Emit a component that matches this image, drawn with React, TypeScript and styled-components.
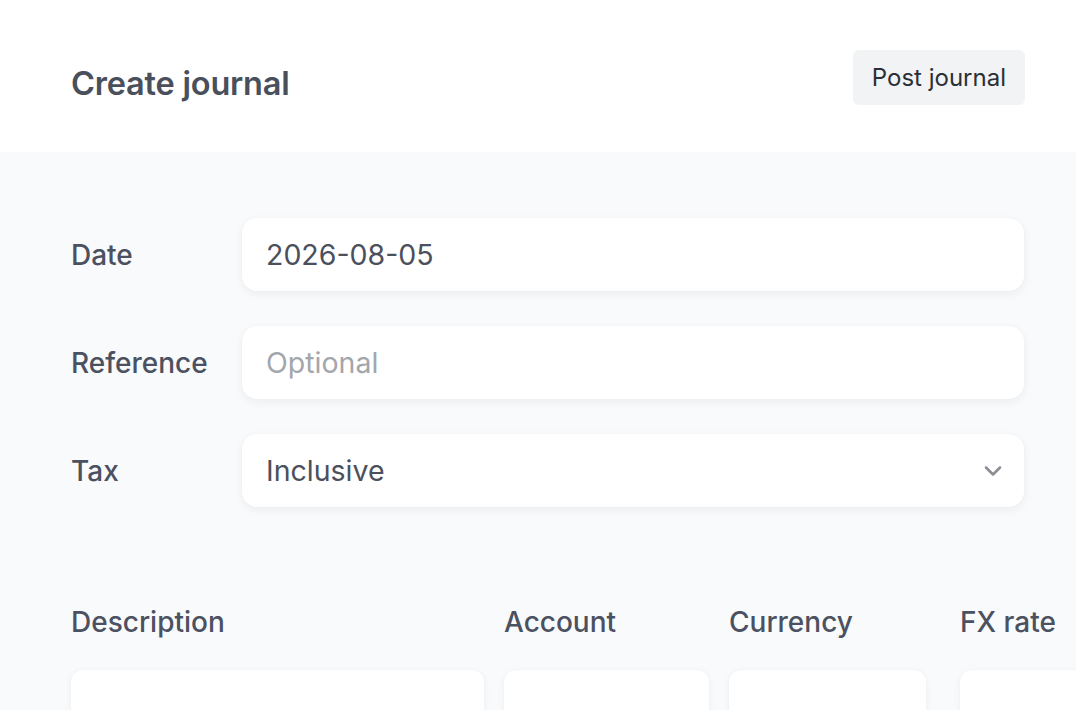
import React, {FC} from 'react';
import styled, {createGlobalStyle} from 'styled-components';
import {ChevronDown} from 'lucide-react';

const GlobalStyle = createGlobalStyle`
    html, body {
        margin: 0;
        padding: 0;
        background: #ffffff;
    }
    body {
        font-family: Inter, "Noto Sans", "Liberation Sans", sans-serif;
        -webkit-font-smoothing: antialiased;
    }
`;

const Page = styled.div`
    width: 1076px;
    height: 710px;
    overflow: hidden;
    display: flex;
    flex-direction: column;
`;

const Header = styled.header`
    height: 152px;
    flex-shrink: 0;
    box-sizing: border-box;
    padding: 0 51px 0 71px;
    display: flex;
    align-items: center;
    justify-content: space-between;
    background: #ffffff;
`;

const Title = styled.h1`
    margin: 0;
    font-size: 32.5px;
    font-weight: 600;
    color: #4a4f5c;
    letter-spacing: -0.2px;
    transform: translateY(7px);
`;

const PostButton = styled.button`
    height: 55px;
    margin-top: 3px;
    padding: 0 19px;
    border: none;
    border-radius: 6px;
    background: #f1f3f5;
    color: #2b2f36;
    font-family: inherit;
    font-size: 24px;
    font-weight: 400;
`;

const Body = styled.main`
    flex: 1;
    background: #f9fafb;
    padding: 66px 52px 0 71px;
    display: flex;
    flex-direction: column;
    gap: 35px;
`;

const FieldRow = styled.div`
    display: grid;
    grid-template-columns: 171px 1fr;
    align-items: center;
`;

const Label = styled.label`
    font-size: 28px;
    font-weight: 500;
    color: #4b5160;
`;

const Field = styled.div<{$placeholder?: boolean}>`
    height: 73px;
    box-sizing: border-box;
    padding: 0 24px;
    display: flex;
    align-items: center;
    justify-content: space-between;
    background: #ffffff;
    border-radius: 15px;
    box-shadow: 0 3px 10px rgba(30, 41, 59, 0.06), 0 0 2px rgba(30, 41, 59, 0.04);
    font-size: 28.5px;
    color: ${(p) => (p.$placeholder ? '#a3a6ab' : '#4b505c')};
`;

const Chevron = styled(ChevronDown)`
    color: #8a8d93;
    margin-right: -7px;
`;

const Lines = styled.div`
    margin-top: 63px;
    display: grid;
    grid-template-columns: 413px 205px 211px 200px;
    column-gap: 20px;
    row-gap: 31px;
    margin-right: -200px;
`;

const ColumnHead = styled.div`
    font-size: 28px;
    font-weight: 500;
    color: #4b5160;
`;

const Cell = styled.div<{$w?: number}>`
    width: ${(p) => (p.$w ? `${p.$w}px` : '100%')};
    height: 73px;
    background: #ffffff;
    border-radius: 12px;
    box-shadow: 0 2px 8px rgba(30, 41, 59, 0.05), 0 0 2px rgba(30, 41, 59, 0.04);
`;

interface FieldDef {
    label: string;
    value: string;
    placeholder?: boolean;
    select?: boolean;
}

const fields: FieldDef[] = [
    {label: 'Date', value: '2026-08-05'},
    {label: 'Reference', value: 'Optional', placeholder: true},
    {label: 'Tax', value: 'Inclusive', select: true},
];

const columns = [
    {name: 'Description'},
    {name: 'Account'},
    {name: 'Currency', w: 197},
    {name: 'FX rate'},
];

const App: FC = () => {
    return (
        <>
            <GlobalStyle/>
            <Page>
                <Header>
                    <Title>{'Create journal'}</Title>
                    <PostButton>{'Post journal'}</PostButton>
                </Header>
                <Body>
                    {fields.map((f) => (
                        <FieldRow key={f.label}>
                            <Label>{f.label}</Label>
                            <Field $placeholder={f.placeholder}>
                                <span>{f.value}</span>
                                {f.select && <Chevron size={28} strokeWidth={2.2}/>}
                            </Field>
                        </FieldRow>
                    ))}
                    <Lines>
                        {columns.map((c) => (
                            <ColumnHead key={c.name}>{c.name}</ColumnHead>
                        ))}
                        {columns.map((c) => (
                            <Cell key={c.name} $w={c.w}/>
                        ))}
                    </Lines>
                </Body>
            </Page>
        </>
    );
};

export default App;
